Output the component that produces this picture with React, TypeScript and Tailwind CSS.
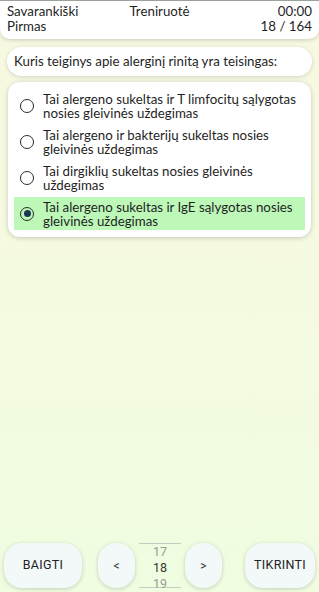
import { useState } from "react";

const OPTIONS = [
  "Tai alergeno sukeltas ir T limfocitų sąlygotas nosies gleivinės uždegimas",
  "Tai alergeno ir bakterijų sukeltas nosies gleivinės uždegimas",
  "Tai dirgiklių sukeltas nosies gleivinės uždegimas",
  "Tai alergeno sukeltas ir IgE sąlygotas nosies gleivinės uždegimas",
];

function Radio({ on }: { on: boolean }) {
  return (
    <span className="flex h-[14px] w-[14px] shrink-0 items-center justify-center rounded-full border-[1.5px] border-[#2b2b2b]">
      {on && <span className="h-[7px] w-[7px] rounded-full bg-[#1d3557]" />}
    </span>
  );
}

export default function App() {
  const [picked, setPicked] = useState(3);

  return (
    <div
      className="flex h-[592px] w-[319px] flex-col overflow-hidden bg-gradient-to-b from-[#f8f8e1] to-[#f0fde0] text-[#1f1f1f]"
      style={{ fontFamily: "Lato, sans-serif" }}
    >
      {/* header */}
      <div className="grid h-[39px] grid-cols-[1fr_auto_1fr] rounded-b-[10px] border-t border-[#9aa39a] bg-white px-[7px] pt-[3px] text-[13.3px] leading-[15px] shadow-[0_1px_4px_rgba(0,0,0,0.18)]">
        <div className="flex flex-col">
          <span>Savarankiški</span>
          <span>Pirmas</span>
        </div>
        <div>Treniruotė</div>
        <div className="flex flex-col items-end">
          <span>00:00</span>
          <span>18 / 164</span>
        </div>
      </div>

      {/* question */}
      <div className="mx-[7px] mt-[8px] flex h-[29px] items-center rounded-full bg-white px-[7px] text-[13.3px] shadow-[0_1px_4px_rgba(0,0,0,0.15)]">
        Kuris teiginys apie alerginį rinitą yra teisingas:
      </div>

      {/* options */}
      <div className="mx-[8px] mt-[6px] flex flex-col gap-[3px] rounded-[12px] bg-white px-[6px] pb-[7px] pt-[7px] shadow-[0_1px_5px_rgba(0,0,0,0.2)]">
        {OPTIONS.map((o, i) => (
          <button
            key={i}
            onClick={() => setPicked(i)}
            className={`flex h-[33px] items-center gap-[9px] pl-[6px] pr-[4px] text-left text-[13.3px] leading-[14px] ${picked === i ? "bg-[#bdf8b9]" : ""}`}
          >
            <Radio on={picked === i} />
            <span>{o}</span>
          </button>
        ))}
      </div>

      <div className="flex-1" />

      {/* bottom bar */}
      <div className="flex items-center px-[4px] pb-[4px]" style={{ fontFamily: "Roboto, sans-serif" }}>
        <button className="h-[45px] w-[78px] rounded-[18px] bg-[#f2f9f8] text-[12.5px] tracking-wide text-[#222] shadow-[0_1px_4px_rgba(0,0,0,0.18)]">
          BAIGTI
        </button>
        <button className="ml-[16px] h-[45px] w-[37px] rounded-[18px] bg-[#f2f9f8] text-[12px] text-[#333] shadow-[0_1px_4px_rgba(0,0,0,0.18)]">
          &lt;
        </button>
        <div className="mx-[4px] flex h-[45px] w-[42px] flex-col items-center justify-between border-y border-[#c8ccc0] text-[12.5px] leading-[15px]">
          <span className="text-[#9a9a9a]">17</span>
          <span className="text-[#333]">18</span>
          <span className="-mb-[4px] text-[#9a9a9a]">19</span>
        </div>
        <button className="h-[45px] w-[37px] rounded-[18px] bg-[#f2f9f8] text-[12px] text-[#333] shadow-[0_1px_4px_rgba(0,0,0,0.18)]">
          &gt;
        </button>
        <div className="flex-1" />
        <button className="h-[45px] w-[70px] rounded-[18px] bg-[#f2f9f8] text-[12.5px] tracking-wide text-[#222] shadow-[0_1px_4px_rgba(0,0,0,0.18)]">
          TIKRINTI
        </button>
      </div>
    </div>
  );
}
